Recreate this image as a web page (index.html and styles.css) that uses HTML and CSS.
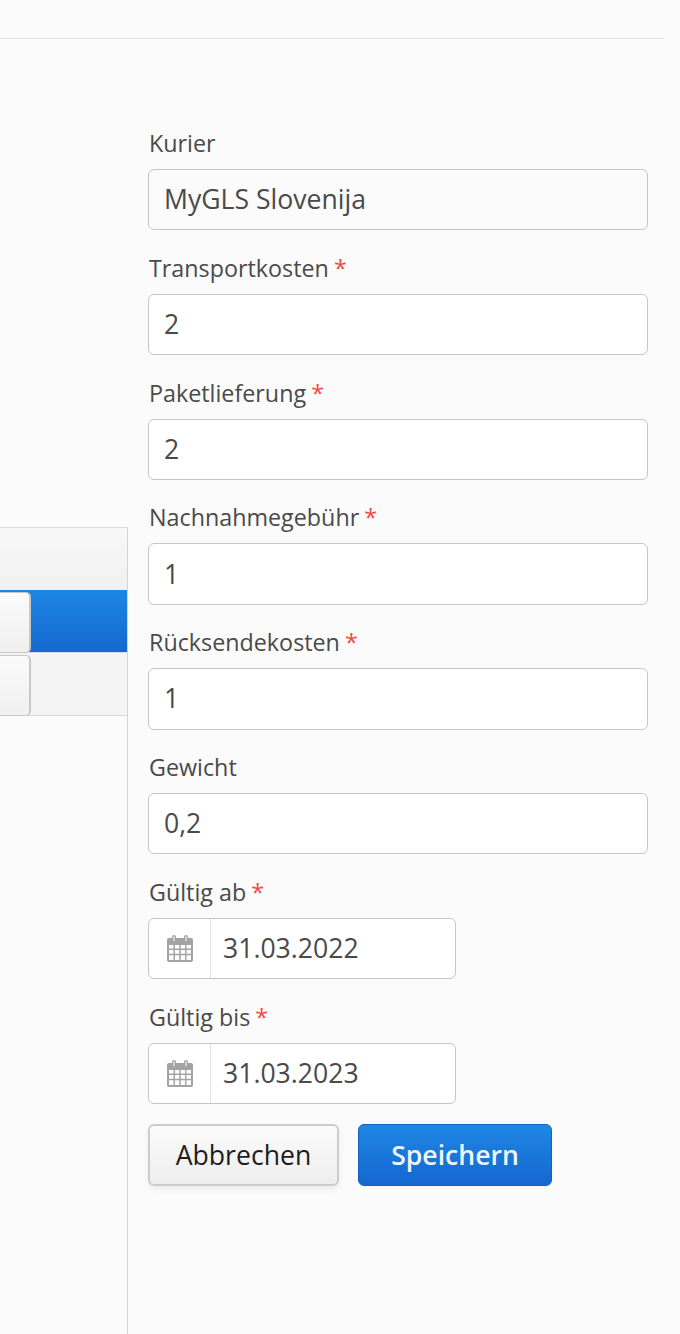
FILE: index.html
```html
<!DOCTYPE html>
<html lang="de">
<head>
  <meta charset="UTF-8">
  <meta name="viewport" content="width=device-width, initial-scale=1.0">
  <title>Kurier</title>
  <link rel="stylesheet" href="styles.css">
</head>
<body>
  <div class="topbar"></div>

  <div class="content">
    <div class="side-panel">
      <div class="side-head"></div>
      <div class="side-row side-row-active"><span class="row-btn"></span></div>
      <div class="side-row"><span class="row-btn"></span></div>
    </div>

    <form class="edit-form">
      <div class="form-group">
        <label class="form-label">Kurier</label>
        <input type="text" class="form-control form-control-readonly" value="MyGLS Slovenija" readonly>
      </div>
      <div class="form-group">
        <label class="form-label">Transportkosten <span class="req">*</span></label>
        <input type="text" class="form-control" value="2">
      </div>
      <div class="form-group">
        <label class="form-label">Paketlieferung <span class="req">*</span></label>
        <input type="text" class="form-control" value="2">
      </div>
      <div class="form-group">
        <label class="form-label">Nachnahmegebühr <span class="req">*</span></label>
        <input type="text" class="form-control" value="1">
      </div>
      <div class="form-group">
        <label class="form-label">Rücksendekosten <span class="req">*</span></label>
        <input type="text" class="form-control" value="1">
      </div>
      <div class="form-group">
        <label class="form-label">Gewicht</label>
        <input type="text" class="form-control" value="0,2">
      </div>
      <div class="form-group">
        <label class="form-label">Gültig ab <span class="req">*</span></label>
        <div class="date-input">
          <span class="date-icon">
            <svg width="26" height="27" viewBox="0 0 26 27"><path fill="#a3a3a3" fill-rule="evenodd" d="M2 3h3V1.500a2 1.500 0 0 1 4 0V3h8V1.500a2 1.500 0 0 1 4 0V3h3a2 2 0 0 1 2 2v20a2 2 0 0 1-2 2H2a2 2 0 0 1-2-2V5a2 2 0 0 1 2-2zM6.500 1.500V6a.6.6 0 0 0 1 0V1.500a.6.6 0 0 0-1 0zm12 0V6a.6.6 0 0 0 1 0V1.500a.6.6 0 0 0-1 0zM2 10v3.500h4.500V10zm6 0v3.500h4.300V10zm5.800 0v3.500h4.300V10zm5.700 0v3.500H24V10zM2 15v3.800h4.500V15zm6 0v3.800h4.300V15zm5.800 0v3.800h4.300V15zm5.700 0v3.800H24V15zM2 20.300V25h4.500v-4.700zm6 0V25h4.300v-4.700zm5.800 0V25h4.300v-4.700zm5.700 0V25H24v-4.700z"/></svg>
          </span>
          <input type="text" class="date-field" value="31.03.2022">
        </div>
      </div>
      <div class="form-group">
        <label class="form-label">Gültig bis <span class="req">*</span></label>
        <div class="date-input">
          <span class="date-icon">
            <svg width="26" height="27" viewBox="0 0 26 27"><path fill="#a3a3a3" fill-rule="evenodd" d="M2 3h3V1.500a2 1.500 0 0 1 4 0V3h8V1.500a2 1.500 0 0 1 4 0V3h3a2 2 0 0 1 2 2v20a2 2 0 0 1-2 2H2a2 2 0 0 1-2-2V5a2 2 0 0 1 2-2zM6.500 1.500V6a.6.6 0 0 0 1 0V1.500a.6.6 0 0 0-1 0zm12 0V6a.6.6 0 0 0 1 0V1.500a.6.6 0 0 0-1 0zM2 10v3.500h4.500V10zm6 0v3.500h4.300V10zm5.800 0v3.500h4.300V10zm5.700 0v3.500H24V10zM2 15v3.800h4.500V15zm6 0v3.800h4.300V15zm5.800 0v3.800h4.300V15zm5.700 0v3.800H24V15zM2 20.300V25h4.500v-4.700zm6 0V25h4.300v-4.700zm5.800 0V25h4.300v-4.700zm5.700 0V25H24v-4.700z"/></svg>
          </span>
          <input type="text" class="date-field" value="31.03.2023">
        </div>
      </div>
      <div class="form-actions">
        <button type="button" class="btn btn-cancel">Abbrechen</button>
        <button type="button" class="btn btn-save">Speichern</button>
      </div>
    </form>
  </div>
</body>
</html>
```

FILE: styles.css
```css
* {
  margin: 0;
  padding: 0;
  box-sizing: border-box;
  font-family: 'Open Sans', sans-serif;
}

html, body {
  height: 100%;
  overflow: hidden;
}

body {
  background-color: #fbfbfb;
  color: #4a4a4a;
}

.topbar {
  width: 664px;
  height: 39px;
  border-bottom: 1px solid #e0e0e0;
}

.content {
  display: flex;
  height: 1295px;
}

.side-panel {
  width: 128px;
  margin-top: 488px;
  border-top: 1px solid #dcdcdc;
  border-right: 1px solid #d4d4d4;
  overflow: hidden;
  flex-shrink: 0;
}

.side-head {
  height: 62px;
  background: linear-gradient(#f8f8f8, #f0f0f0);
}

.side-row {
  height: 63px;
  padding-top: 2px;
  background-color: #f4f4f4;
  border-bottom: 1px solid #dadada;
}

.side-row-active {
  background: linear-gradient(#1c86e3, #1568cf);
  border-bottom: 1px solid #cfdcea;
}

.row-btn {
  display: block;
  width: 41px;
  height: 61px;
  margin-left: -10px;
  background: linear-gradient(#fbfbfb, #f0f0f0);
  border: 1px solid #c8c8c8;
  border-right-width: 2px;
  border-radius: 5px;
}

.edit-form {
  width: 500px;
  margin-left: 20px;
  padding-top: 87px;
}

.form-group {
  height: 124.8px;
}

.form-label {
  display: block;
  height: 43px;
  padding-left: 1px;
  font-size: 23.3px;
  line-height: 34px;
  color: #4a4a4a;
}

.req {
  color: #ef4b43;
  margin-left: -1px;
}

.form-control {
  display: block;
  width: 100%;
  height: 61.5px;
  padding: 0 15px 1px;
  background-color: #fff;
  border: 1px solid #c6c6c6;
  border-radius: 6px;
  font-size: 26.6px;
  color: #4a4a4a;
  outline: none;
}

.form-control-readonly {
  height: 61px;
  background-color: #fbfbfb;
}

.date-input {
  display: flex;
  width: 308px;
  height: 61px;
  background-color: #fff;
  border: 1px solid #c6c6c6;
  border-radius: 6px;
  overflow: hidden;
}

.date-icon {
  display: flex;
  align-items: center;
  justify-content: center;
  width: 62px;
  border-right: 1px solid #e2e2e2;
  flex-shrink: 0;
}

.date-field {
  flex: 1;
  min-width: 0;
  padding: 0 12px 1px;
  border: none;
  background: none;
  font-size: 26.6px;
  color: #4a4a4a;
  outline: none;
}

.form-actions {
  display: flex;
  gap: 19px;
}

.btn {
  height: 62px;
  border-radius: 6px;
  font-size: 26.6px;
  cursor: pointer;
}

.btn-cancel {
  width: 191px;
  color: #1d1d1d;
  background: linear-gradient(#fbfbfb, #eeeeee);
  border: 2px solid #cccccc;
  box-shadow: 0 3px 6px rgba(0, 0, 0, 0.06);
}

.btn-save {
  width: 194px;
  font-weight: 600;
  color: #eef5fd;
  background: linear-gradient(#1e87e5, #1567cf);
  border: 1px solid #1760bd;
}
```
